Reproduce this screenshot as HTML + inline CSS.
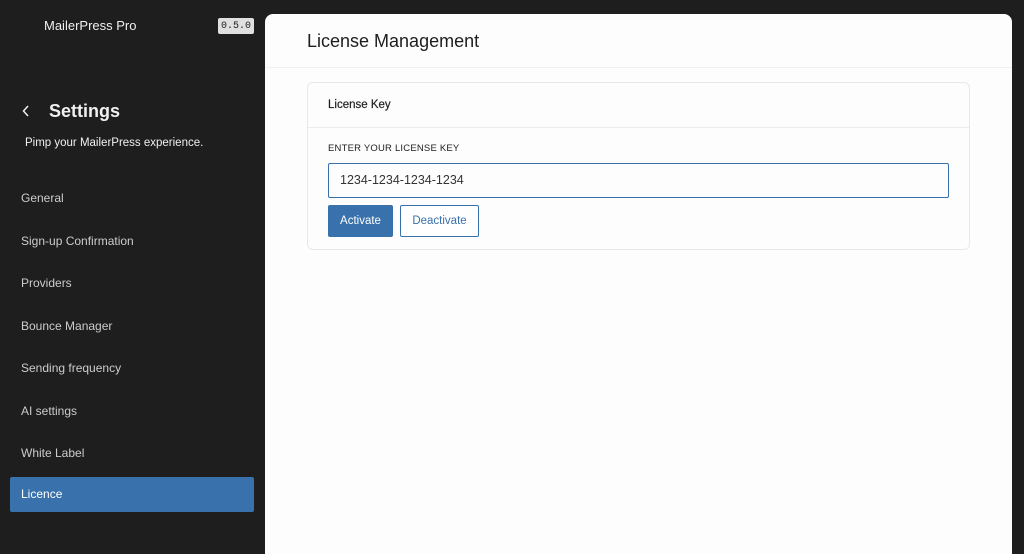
<!DOCTYPE html>
<html><head><style>
*{box-sizing:border-box;margin:0;padding:0}
body{width:1024px;height:541px;background:#1e1e1e;font-family:"Liberation Sans",sans-serif;position:relative;overflow:hidden}
.t{position:absolute;color:#f0f0f0}
.ver{position:absolute;left:218px;top:18px;width:36px;height:16px;background:#e0e0e0;border-radius:2px;font-family:"Liberation Mono",monospace;font-size:10px;color:#1e1e1e;text-align:center;line-height:16px;padding-top:1px}
.nav{position:absolute;left:21px;font-size:12px;color:#ccc}
.act{position:absolute;left:10px;top:477px;width:244px;height:35px;background:#3871ab;border-radius:2px;color:#fff;font-size:12px;line-height:35px;padding-left:11px}
.main{position:absolute;left:265px;top:14px;width:747px;height:540px;background:#fdfdfd;border-radius:8px 8px 0 0}
.hd{height:54px;border-bottom:1px solid #f0f0f0;font-size:18px;color:#1e1e1e;padding-left:42px;line-height:54px}
.card{position:absolute;left:42px;top:68px;width:663px;height:168px;border:1px solid #e8e8e8;border-radius:6px;background:#fdfdfd}
.ch{height:45px;border-bottom:1px solid #ececec;font-size:11.5px;color:#1e1e1e;padding-left:20px;line-height:45px;-webkit-text-stroke:0.2px #1e1e1e}
.lbl{position:absolute;left:20px;top:60px;font-size:9.5px;color:#1e1e1e;letter-spacing:.2px}
.inp{position:absolute;left:20px;top:80px;width:621px;height:35px;border:1px solid #3871ab;border-radius:2px;font-size:12.5px;color:#333;line-height:33px;padding-left:11px}
.b1{position:absolute;left:20px;top:122px;width:65px;height:32px;background:#3871ab;border-radius:2px;color:#fff;font-size:11.5px;text-align:center;line-height:32px}
.b2{position:absolute;left:92px;top:122px;width:79px;height:32px;border:1px solid #3871ab;border-radius:2px;color:#3871ab;font-size:11.5px;text-align:center;line-height:30px;background:#fff}
</style></head><body>
<div class="t" style="left:44px;top:18px;font-size:13px">MailerPress Pro</div>
<div class="ver">0.5.0</div>
<svg style="position:absolute;left:22px;top:105px" width="8" height="12" viewBox="0 0 8 12"><path d="M6 1L1.5 6L6 11" fill="none" stroke="#f0f0f0" stroke-width="1.5"/></svg>
<div class="t" style="left:49px;top:101px;font-size:18px;font-weight:bold">Settings</div>
<div class="t" style="left:25px;top:137px;font-size:11.5px">Pimp your MailerPress experience.</div>
<div class="nav" style="top:191px">General</div>
<div class="nav" style="top:234px">Sign-up Confirmation</div>
<div class="nav" style="top:276px">Providers</div>
<div class="nav" style="top:319px">Bounce Manager</div>
<div class="nav" style="top:361px">Sending frequency</div>
<div class="nav" style="top:404px">AI settings</div>
<div class="nav" style="top:446px">White Label</div>
<div class="act">Licence</div>
<div class="main">
<div class="hd">License Management</div>
<div class="card">
<div class="ch">License Key</div>
<div class="lbl">ENTER YOUR LICENSE KEY</div>
<div class="inp">1234-1234-1234-1234</div>
<div class="b1">Activate</div>
<div class="b2">Deactivate</div>
</div>
</div>
</body></html>
